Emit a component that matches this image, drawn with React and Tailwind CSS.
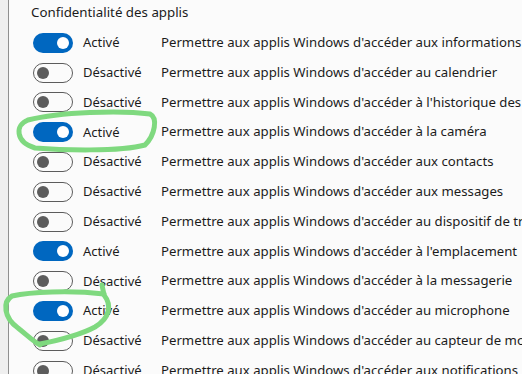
const rows = [
  { on: true, text: "aux informations de compte" },
  { on: false, text: "au calendrier" },
  { on: false, text: "à l'historique des appels" },
  { on: true, text: "à la caméra" },
  { on: false, text: "aux contacts" },
  { on: false, text: "aux messages" },
  { on: false, text: "au dispositif de transmission" },
  { on: true, text: "à l'emplacement" },
  { on: false, text: "à la messagerie" },
  { on: true, text: "au microphone" },
  { on: false, text: "au capteur de mouvement" },
  { on: false, text: "aux notifications" },
];

function Toggle({ on }) {
  if (on) {
    return (
      <div className="flex h-5 w-10 shrink-0 items-center justify-end rounded-full bg-[#0067c0] pr-1">
        <div className="h-3 w-3 rounded-full bg-white" />
      </div>
    );
  }
  return (
    <div className="flex h-5 w-10 shrink-0 items-center rounded-full border border-[#5c5c5c] pl-[3px]">
      <div className="h-3 w-3 rounded-full bg-[#5c5c5c]" />
    </div>
  );
}

export default function App() {
  return (
    <div
      className="relative flex h-[374px] w-[522px] overflow-hidden bg-[#fbfbfb] text-[13px] text-[#1b1b1b]"
      style={{ fontFamily: '"Noto Sans", "Open Sans", sans-serif' }}
    >
      <div className="w-[9px] shrink-0 border-r border-[#8f8f8f] bg-[#efefef]" />
      <div className="min-w-0 flex-1 pl-[22px] pt-[2px]">
        <div className="h-[20px] whitespace-nowrap text-[13.3px] leading-[20px]">Confidentialité des applis</div>
        <div className="pt-[6px]">
          {rows.map((r, i) => (
            <div key={i} className="flex h-[29.8px] items-center whitespace-nowrap">
              <div className="w-[2px] shrink-0" />
              <Toggle on={r.on} />
              <div className="w-[88px] shrink-0 pl-[10px]">{r.on ? "Activé" : "Désactivé"}</div>
              <div className="text-[13.2px]">Permettre aux applis Windows d'accéder {r.text}</div>
            </div>
          ))}
        </div>
      </div>
      <svg className="pointer-events-none absolute inset-0" width="522" height="374" fill="none" stroke="#7fd97f" strokeWidth="5" strokeLinecap="round" strokeLinejoin="round">
        <path d="M28 120 C60 112 120 110 150 114 C158 118 155 135 145 145 C120 152 60 150 35 148 C15 142 15 125 28 120" />
        <path d="M102 285 L104 295 C112 305 110 318 95 327 C80 335 60 340 40 344" />
        <path d="M104 294 C70 290 30 292 12 296 C2 302 4 318 18 328 C28 336 34 342 40 345" />
      </svg>
    </div>
  );
}
